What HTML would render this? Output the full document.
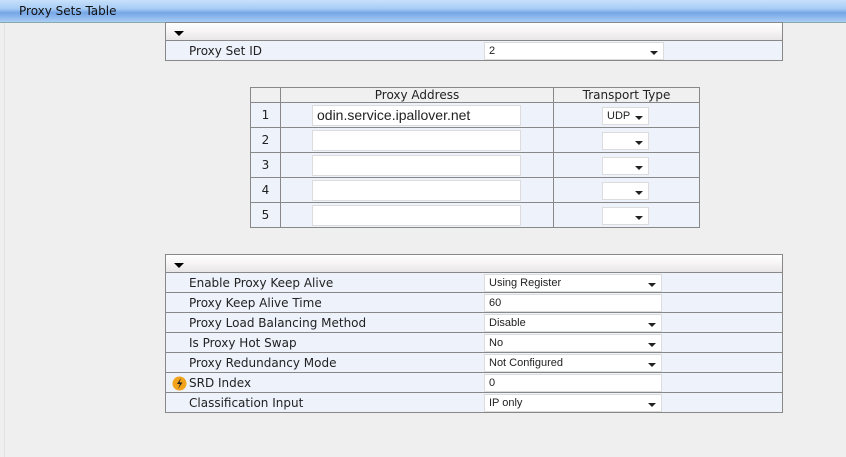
<!DOCTYPE html>
<html><head><meta charset="utf-8"><style>
*{margin:0;padding:0;box-sizing:border-box}
body{width:846px;height:457px;background:#efefef;font-family:Tahoma,"DejaVu Sans",sans-serif;font-size:12px;color:#222;position:relative;overflow:hidden}
.a{position:absolute}
.bar{left:0;top:0;width:846px;height:23px;background:linear-gradient(#c8e0fa 0,#a6ccf5 40%,#76a6e6 58%,#a9cdf5 100%);border-bottom:1px solid #8aa;}
.bar span{position:absolute;left:19px;top:4px;font-size:12px;color:#111}
.box{border:1px solid #888;background:#edf2fb}
.hdr{background:linear-gradient(#fff,#f6f4f4 50%,#e8e6e6);border-bottom:1px solid #888}
.arr{width:0;height:0;border-left:5px solid transparent;border-right:5px solid transparent;border-top:5px solid #000}
.row{position:absolute;left:0;right:0;height:20px;border-bottom:1px solid #888}
.row .l{position:absolute;left:23px;top:3px}
.in{position:absolute;background:#fff;border:1px solid #dcdcdc;font-family:"Liberation Sans",Arial,sans-serif;font-size:11px;padding:2px 4px}
.sel:after{content:"";position:absolute;right:5px;top:8px;border-left:4px solid transparent;border-right:4px solid transparent;border-top:4px solid #222}
table{position:absolute;border-collapse:collapse;left:250px;top:87px}
td{border:1px solid #888;position:relative;height:25px;background:#edf2fb;text-align:center}
</style></head><body>
<div class="a" style="left:4px;top:23px;width:1px;height:434px;background:#e2e2e2"></div>
<div class="a bar"><span>Proxy Sets Table</span></div>

<div class="a box" style="left:165px;top:22px;width:618px;height:39px">
 <div class="hdr" style="height:18px;position:relative"><div class="a arr" style="left:8px;top:8px"></div></div>
 <div class="a" style="left:23px;top:21px">Proxy Set ID</div>
 <div class="in sel" style="left:318px;top:19px;width:180px;height:18px">2</div>
</div>

<table>
<tr><td style="width:30px;height:15px;background:#f0f0f0"></td><td style="width:273px;height:15px;background:#f0f0f0">Proxy Address</td><td style="width:146px;height:15px;background:#f0f0f0">Transport Type</td></tr>
<tr><td>1</td><td><div class="in" style="left:31px;top:2px;width:209px;height:21px;font-size:14px;padding:1px 4px;text-align:left">odin.service.ipallover.net</div></td><td><div class="in sel" style="left:48px;top:4px;width:47px;height:18px;text-align:left">UDP</div></td></tr>
<tr><td>2</td><td><div class="in" style="left:31px;top:2px;width:209px;height:21px"></div></td><td><div class="in sel" style="left:48px;top:4px;width:47px;height:18px"></div></td></tr>
<tr><td>3</td><td><div class="in" style="left:31px;top:2px;width:209px;height:21px"></div></td><td><div class="in sel" style="left:48px;top:4px;width:47px;height:18px"></div></td></tr>
<tr><td>4</td><td><div class="in" style="left:31px;top:2px;width:209px;height:21px"></div></td><td><div class="in sel" style="left:48px;top:4px;width:47px;height:18px"></div></td></tr>
<tr><td>5</td><td><div class="in" style="left:31px;top:2px;width:209px;height:21px"></div></td><td><div class="in sel" style="left:48px;top:4px;width:47px;height:18px"></div></td></tr>
</table>

<div class="a box" style="left:165px;top:254px;width:618px;height:159px">
 <div class="hdr" style="height:18px;position:relative"><div class="a arr" style="left:8px;top:8px"></div></div>
 <div class="row" style="top:18px"><span class="l">Enable Proxy Keep Alive</span><div class="in sel" style="left:318px;top:1px;width:178px;height:18px">Using Register</div></div>
 <div class="row" style="top:38px"><span class="l">Proxy Keep Alive Time</span><div class="in" style="left:318px;top:1px;width:178px;height:18px">60</div></div>
 <div class="row" style="top:58px"><span class="l">Proxy Load Balancing Method</span><div class="in sel" style="left:318px;top:1px;width:178px;height:18px">Disable</div></div>
 <div class="row" style="top:78px"><span class="l">Is Proxy Hot Swap</span><div class="in sel" style="left:318px;top:1px;width:178px;height:18px">No</div></div>
 <div class="row" style="top:98px"><span class="l">Proxy Redundancy Mode</span><div class="in sel" style="left:318px;top:1px;width:178px;height:18px">Not Configured</div></div>
 <div class="row" style="top:118px"><svg class="a" style="left:6px;top:3px" width="15" height="15" viewBox="0 0 15 15"><circle cx="7.5" cy="7.5" r="7" fill="#f2a31c"/><path d="M9 2 L5 8 H8 L6 13 L10.5 6.5 H7.5 Z" fill="#222"/></svg><span class="l">SRD Index</span><div class="in" style="left:318px;top:1px;width:178px;height:18px">0</div></div>
 <div class="row" style="top:138px;border-bottom:none"><span class="l">Classification Input</span><div class="in sel" style="left:318px;top:1px;width:178px;height:18px">IP only</div></div>
</div>
</body></html>
